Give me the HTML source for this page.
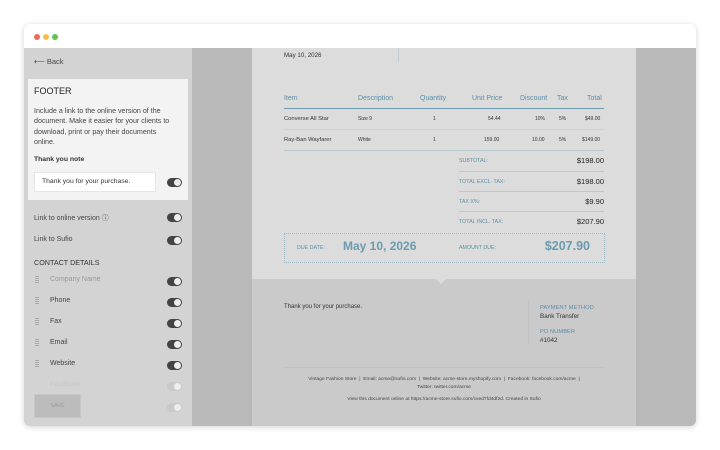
<!DOCTYPE html>
<html><head><style>
*{margin:0;padding:0;box-sizing:border-box}
body{width:720px;height:450px;background:#fff;font-family:"Liberation Sans",sans-serif;position:relative;overflow:hidden}
.win{position:absolute;left:24px;top:24px;width:672px;height:402px;border-radius:6px;overflow:hidden;box-shadow:0 1px 6px rgba(0,0,0,.18);background:#fff}
.dot{position:absolute;top:10px;width:6px;height:6px;border-radius:50%}
.a{position:absolute;white-space:nowrap}
.side{position:absolute;left:0;top:24px;width:168px;height:378px;background:#d3d3d3}
.tg{position:absolute;width:15px;height:9px;border-radius:4.5px;background:#444}
.tg:after{content:"";position:absolute;right:1px;top:1px;width:7px;height:7px;border-radius:50%;background:#eee}
.mid{position:absolute;left:168px;top:24px;width:504px;height:378px;background:#b9b9b9}
.doc{position:absolute;left:228px;top:24px;width:384px;height:378px;background:#dcdcdc}
.low{position:absolute;left:228px;top:255px;width:384px;height:147px;background:#cacaca}
.th{color:#5b8fa6;font-size:7px}
.td{font-size:5.8px;color:#333}
.tl{color:#5b8fa6;font-size:5.3px}
.tv{font-size:7.5px;color:#222}
.hl{position:absolute;height:1px;background:#b7c9d1}
.grip{position:absolute;left:11px;width:4px;height:8px;background:repeating-linear-gradient(#aaa 0 1px,transparent 1px 2px)}
.lb{font-size:7px;color:#444}
</style></head><body>
<div class="win">
<div class="dot" style="left:10px;background:#ed6a5e"></div>
<div class="dot" style="left:19px;background:#f5bf4f"></div>
<div class="dot" style="left:28px;background:#61c554"></div>
<div class="side">
 <div class="a" style="left:10px;top:9px;font-size:7.5px;color:#444">⟵ Back</div>
 <div class="a" style="left:4px;top:31px;width:160px;height:121px;background:#f3f3f3"></div>
 <div class="a" style="left:10px;top:38px;font-size:9px;color:#222">FOOTER</div>
 <div class="a" style="left:10px;top:58px;font-size:7.1px;line-height:10.3px;color:#444;white-space:normal;width:143px">Include a link to the online version of the document. Make it easier for your clients to download, print or pay their documents online.</div>
 <div class="a" style="left:10px;top:108px;font-size:6.8px;font-weight:bold;color:#333">Thank you note</div>
 <div class="a" style="left:10px;top:124px;width:122px;height:20px;background:#fff;border:1px solid #e6e6e6;font-size:6.8px;color:#333;padding:5px 7px">Thank you for your purchase.</div>
 <div class="tg" style="left:143px;top:130px"></div>
 <div class="a lb" style="left:10px;top:165px">Link to online version ⓘ</div><div class="tg" style="left:143px;top:165px"></div>
 <div class="a lb" style="left:10px;top:188px">Link to Sufio</div><div class="tg" style="left:143px;top:188px"></div>
 <div class="a" style="left:10px;top:210px;font-size:7.2px;color:#333">CONTACT DETAILS</div>
 <div class="grip" style="top:228px"></div><div class="a lb" style="left:26px;top:228px;color:#999">Company Name</div><div class="tg" style="left:143px;top:229px"></div>
 <div class="grip" style="top:249px"></div><div class="a lb" style="left:26px;top:249px">Phone</div><div class="tg" style="left:143px;top:250px"></div>
 <div class="grip" style="top:270px"></div><div class="a lb" style="left:26px;top:270px">Fax</div><div class="tg" style="left:143px;top:271px"></div>
 <div class="grip" style="top:291px"></div><div class="a lb" style="left:26px;top:291px">Email</div><div class="tg" style="left:143px;top:292px"></div>
 <div class="grip" style="top:312px"></div><div class="a lb" style="left:26px;top:312px">Website</div><div class="tg" style="left:143px;top:313px"></div>
 <div class="a lb" style="left:26px;top:333px;color:#c8c8c8">Facebook</div><div class="tg" style="left:143px;top:334px;background:#c9c9c9"></div>
 <div class="a" style="left:10px;top:346px;width:47px;height:24px;background:#bcbcbc;border:1px solid #c8c8c8;font-size:5.5px;color:#999;text-align:center;line-height:22px">SAVE</div>
 <div class="tg" style="left:143px;top:355px;background:#c9c9c9"></div>
</div>
<div class="mid"></div>
<div class="doc"></div>
<div class="low"></div>
<div class="a" style="left:412px;top:255px;width:0;height:0;border-left:5px solid transparent;border-right:5px solid transparent;border-top:5px solid #dcdcdc"></div>
<div class="a td" style="left:260px;top:28px;font-size:6.2px">May 10, 2026</div>
<div class="a" style="left:374px;top:24px;width:1px;height:14px;background:#c2ccd0"></div>
<div class="a th" style="left:260px;top:71px">Item</div>
<div class="a th" style="left:334px;top:71px">Description</div>
<div class="a th" style="left:396px;top:71px">Quantity</div>
<div class="a th" style="left:448px;top:71px">Unit Price</div>
<div class="a th" style="left:496px;top:71px">Discount</div>
<div class="a th" style="left:533px;top:71px">Tax</div>
<div class="a th" style="left:563px;top:71px">Total</div>
<div class="hl" style="left:260px;top:84px;width:320px;background:#6f9cb0"></div>
<div class="a td" style="left:260px;top:92px">Converse All Star</div><div class="a td" style="left:334px;top:92px;font-size:5px">Size 9</div><div class="a td" style="left:409px;top:92px;font-size:5px">1</div><div class="a td" style="left:464px;top:92px;font-size:5px">54.44</div><div class="a td" style="left:511px;top:92px;font-size:5px">10%</div><div class="a td" style="left:535px;top:92px;font-size:5px">5%</div><div class="a td" style="left:561px;top:92px;font-size:5px">$49.00</div>
<div class="hl" style="left:260px;top:105px;width:320px;background:#cdd3d6"></div>
<div class="a td" style="left:260px;top:113px">Ray-Ban Wayfarer</div><div class="a td" style="left:334px;top:113px;font-size:5px">White</div><div class="a td" style="left:409px;top:113px;font-size:5px">1</div><div class="a td" style="left:460px;top:113px;font-size:5px">159.00</div><div class="a td" style="left:508px;top:113px;font-size:5px">10.00</div><div class="a td" style="left:535px;top:113px;font-size:5px">5%</div><div class="a td" style="left:558px;top:113px;font-size:5px">$149.00</div>
<div class="hl" style="left:260px;top:126px;width:320px"></div>
<div class="a tl" style="left:435px;top:134px">SUBTOTAL:</div><div class="a tv" style="right:92px;top:132px">$198.00</div>
<div class="hl" style="left:435px;top:147px;width:145px"></div>
<div class="a tl" style="left:435px;top:155px">TOTAL EXCL. TAX:</div><div class="a tv" style="right:92px;top:153px">$198.00</div>
<div class="hl" style="left:435px;top:167px;width:145px"></div>
<div class="a tl" style="left:435px;top:175px">TAX X%:</div><div class="a tv" style="right:92px;top:173px">$9.90</div>
<div class="hl" style="left:435px;top:187px;width:145px"></div>
<div class="a tl" style="left:435px;top:195px">TOTAL INCL. TAX:</div><div class="a tv" style="right:92px;top:193px">$207.90</div>
<div class="a" style="left:260px;top:209px;width:321px;height:30px;border:1px dotted #9fbac6"></div>
<div class="a tl" style="left:273px;top:221px">DUE DATE:</div>
<div class="a" style="left:319px;top:215px;font-size:12px;font-weight:bold;color:#6b9bb0">May 10, 2026</div>
<div class="a tl" style="left:435px;top:221px">AMOUNT DUE:</div>
<div class="a" style="right:106px;top:215px;font-size:12.5px;font-weight:bold;color:#6b9bb0">$207.90</div>
<div class="a td" style="left:260px;top:280px;font-size:6px">Thank you for your purchase.</div>
<div class="a" style="left:504px;top:276px;width:1px;height:44px;background:#c2c2c2"></div>
<div class="a tl" style="left:516px;top:281px;font-size:5.8px">PAYMENT METHOD</div>
<div class="a td" style="left:516px;top:289px;font-size:6.3px">Bank Transfer</div>
<div class="a tl" style="left:516px;top:305px;font-size:5.8px">PO NUMBER</div>
<div class="a td" style="left:516px;top:313px;font-size:6.3px">#1042</div>
<div class="hl" style="left:260px;top:343px;width:320px;background:#c2c2c2"></div>
<div class="a" style="left:228px;top:352px;width:384px;text-align:center;font-size:4.9px;color:#444;line-height:8px;white-space:normal">Vintage Fashion Store &nbsp;| &nbsp;Email: acme@sufio.com &nbsp;| &nbsp;Website: acme-store.myshopify.com &nbsp;| &nbsp;Facebook: facebook.com/acme &nbsp;|<br>Twitter: twitter.com/acme</div>
<div class="a" style="left:228px;top:373px;width:384px;text-align:center;font-size:4.9px;color:#444">View this document online at https://acme-store.sufio.com/cxed7fd4df2d. Created in Sufio</div>
</div>
</body></html>
